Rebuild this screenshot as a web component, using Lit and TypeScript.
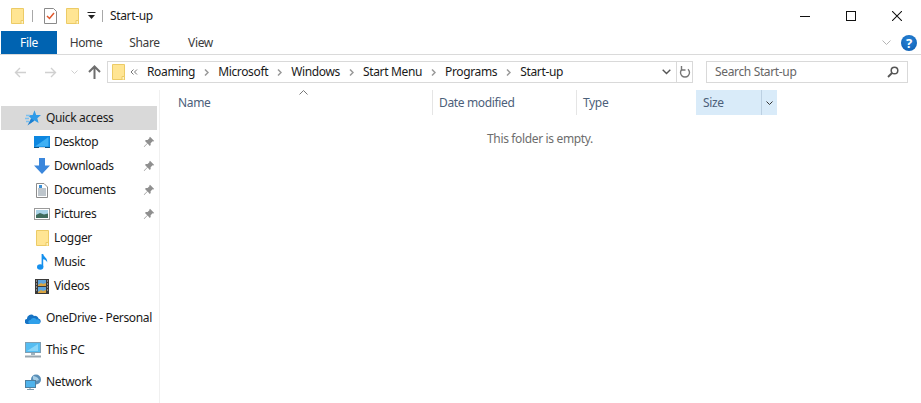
import { LitElement, html, css, svg } from "lit";
import { customElement } from "lit/decorators.js";

const folder = svg`<svg width="13" height="16" viewBox="0 0 13 16"><path d="M.5.5h12v15H.5z" fill="#ffe593" stroke="#eccb66"/><path d="M10 12.500h2.500V16H10z" fill="#fff3c4" stroke="#eccb66"/></svg>`;
const pin = svg`<svg width="12" height="12" viewBox="0 0 12 12"><path d="M7 .8l4.200 4.200-1 .6-.6-.3-2 2 .1 1.800-.9.800L4.600 7.600 1.200 11l-.4-.4 3.400-3.400-2.200-2.300.8-.9 1.800.1 2-2-.3-.6z" fill="#8f8f8f"/></svg>`;

const icons: Record<string, unknown> = {
  star: svg`<svg width="16" height="16" viewBox="0 0 16 16"><path d="M9.500.3l1.700 4.600 4.800.2-3.700 3.100 1.300 4.800-4.200-2.600L5 13.400l1.200-4.900-3.400-3.300 4.900-.3z" fill="#2f9be8"/><path d="M1 5.500h4M0 8.500h4M1 11.500h3" stroke="#7cc0ef" stroke-width="1.400"/><path d="M6 8.500L2.500 15.500 9.300 10.800z" fill="#1c7fd0"/></svg>`,
  desktop: svg`<svg width="16" height="13" viewBox="0 0 16 13"><rect width="16" height="12" fill="#0d87e0"/><path d="M1 10.500L14.500 1v9.500z" fill="#3fb0f4"/><path d="M0 11.500h16" stroke="#10507f"/><path d="M5 11.500h6" stroke="#cfd8df"/></svg>`,
  down: svg`<svg width="16" height="16" viewBox="0 0 16 16"><path d="M5 0h6v7.500h5L8 16 0 7.500h5z" fill="#3b87dc"/></svg>`,
  doc: svg`<svg width="12" height="15" viewBox="0 0 12 15"><path d="M.5.5h7.500l3.500 3.500v10.500H.5z" fill="#fff" stroke="#8c8c8c"/><path d="M2 6h8M2 8h8M2 10h8M2 12h8" stroke="#7d8c99"/><path d="M3 2v3h3V2z" fill="#3a8fd6"/></svg>`,
  pic: svg`<svg width="16" height="12" viewBox="0 0 16 12"><rect x=".5" y=".5" width="15" height="11" fill="#fff" stroke="#9a9a9a"/><rect x="2" y="2" width="12" height="8" fill="#a8d2e6"/><path d="M2 7l4-2 4 1.500 4-1V10H2z" fill="#3f6b5c"/></svg>`,
  folder,
  music: svg`<svg width="11" height="16" viewBox="0 0 11 16"><ellipse cx="3.200" cy="13" rx="3.200" ry="2.800" fill="#1590ee"/><path d="M4.600 0h1.600c.3 3 4.600 4 4 8.500C9.800 6.500 7.500 5.500 6.200 5.200V13H4.600z" fill="#1590ee"/></svg>`,
  video: svg`<svg width="14" height="15" viewBox="0 0 14 15"><rect width="14" height="15" fill="#3a3a3a"/><path d="M1 1.500h1v1H1zM1 4.500h1v1H1zM1 7.500h1v1H1zM1 10.500h1v1H1zM12 1.500h1v1h-1zM12 4.500h1v1h-1zM12 7.500h1v1h-1zM12 10.500h1v1h-1z" fill="#ddd"/><rect x="3" y="1" width="8" height="6" fill="#5ea4dc"/><rect x="3" y="8" width="8" height="6" fill="#5ea4dc"/><path d="M3 6l3-2 2 1 3-1v3H3zM3 13l3-2 2 1 3-1v3H3z" fill="#d9a441"/></svg>`,
  cloud: svg`<svg width="16" height="11" viewBox="0 0 16 11"><path d="M2.500 11A2.500 2.500 0 0 1 2 6a4 4 0 0 1 7-3 3.500 3.500 0 0 1 4.500 2.500A2.800 2.800 0 0 1 13.500 11z" fill="#1673c4"/><path d="M5 11a2 2 0 0 1 .5-4 3.500 3.500 0 0 1 6-.5A2.300 2.300 0 0 1 13.500 11z" fill="#2fa0ea"/></svg>`,
  pc: svg`<svg width="16" height="16" viewBox="0 0 16 16"><rect x=".5" y=".5" width="15" height="10" fill="#55bdf2" stroke="#7f9fb3"/><path d="M2 9L13 2v7z" fill="#8ad6f9"/><path d="M6 11h4v2H6z" fill="#9fb3c0"/><path d="M0 14.500h16" stroke="#9aa6ae" stroke-width="2"/></svg>`,
  net: svg`<svg width="16" height="16" viewBox="0 0 16 16"><circle cx="11" cy="5.500" r="5" fill="#5a8fb8"/><path d="M8 2c2 0 5 1 6 4-2 1-5 1-6-1z" fill="#a8cfe6"/><rect x=".5" y="6.500" width="10" height="7" fill="#4fb3ec" stroke="#4d7f9f"/><path d="M5 14v1.500M2 15.500h7" stroke="#7d9aad"/></svg>`,
};

const nav = [
  { label: "Quick access", icon: "star", cls: "top sel" },
  { label: "Desktop", icon: "desktop", pin: true },
  { label: "Downloads", icon: "down", pin: true },
  { label: "Documents", icon: "doc", pin: true },
  { label: "Pictures", icon: "pic", pin: true },
  { label: "Logger", icon: "folder" },
  { label: "Music", icon: "music" },
  { label: "Videos", icon: "video" },
  { label: "OneDrive - Personal", icon: "cloud", cls: "top gap" },
  { label: "This PC", icon: "pc", cls: "top gap" },
  { label: "Network", icon: "net", cls: "top gap" },
];

const crumbs = ["Roaming", "Microsoft", "Windows", "Start Menu", "Programs", "Start-up"];

@customElement("app-root")
export class AppRoot extends LitElement {
  static styles = css`
    :host { display: block; width: 921px; height: 403px; overflow: hidden; background: #fff;
      font: 12px/16px "Noto Sans", "Open Sans", sans-serif; color: #1a1a1a; letter-spacing: -0.35px; }
    .title { height: 31px; display: flex; align-items: center; padding-left: 11px; box-sizing: border-box; }
    .title svg { display: block; }
    .bar { width: 1px; height: 12px; background: #a8a8a8; }
    .b1 { margin: 0 11px 0 8px; }
    .chk { margin-right: 9px; }
    .qa { margin: 0 6px 0 8px; }
    .b2 { margin-right: 7px; }
    .win { margin-left: auto; margin-right: 1px; display: flex; }
    .win span { width: 46px; height: 30px; display: flex; align-items: center; justify-content: center; }
    .ribbon { height: 24px; display: flex; border-bottom: 1px solid #dadada; padding-left: 1px; box-sizing: border-box; align-items: stretch; }
    .tab { color: #3b3b3b; display: flex; align-items: center; justify-content: center; padding-top: 1px; }
    .file { width: 56px; background: #0063b1; color: #fff; }
    .t1 { width: 58px; }
    .t2 { width: 59px; }
    .t3 { width: 53px; }
    .help { margin-left: auto; display: flex; align-items: center; gap: 10px; margin-right: 4px; }
    .q { width: 16px; height: 16px; border-radius: 50%; background: radial-gradient(circle at 50% 35%, #2a85d8, #0a5aae); color: #fff; font-weight: 700; font-size: 13px; line-height: 16px; text-align: center; letter-spacing: 0; }
    .addr { height: 35px; display: flex; align-items: center; padding: 0 13px 1px 14px; box-sizing: border-box; }
    .navs { display: flex; align-items: center; width: 93px; }
    .fwd { margin-left: 17px; }
    .rec { margin-left: 14px; }
    .up { margin-left: 10px; }
    .box { height: 22px; border: 1px solid #d9d9d9; box-sizing: border-box; display: flex; align-items: center; }
    .path { width: 586px; }
    .path .f { margin: 0 5px 0 4px; display: flex; }
    .lt { margin-right: 9px; }
    .sep { margin: 0 9px; display: flex; }
    .end { margin-left: auto; display: flex; align-items: center; height: 100%; }
    .dd { width: 19px; display: flex; justify-content: center; }
    .rf { width: 16px; height: 100%; box-sizing: border-box; border-left: 1px solid #d9d9d9; display: flex; align-items: center; justify-content: center; }
    .search { width: 202px; margin-left: 13px; padding: 0 8px; color: #666; justify-content: space-between; }
    .main { display: flex; height: 313px; }
    .side { width: 160px; box-sizing: border-box; border-right: 1px solid #f0f0f0; padding: 16px 0 0 1px; flex: none; }
    .row { height: 24px; display: flex; align-items: center; width: 156px; }
    .ico { width: 16px; display: flex; justify-content: center; align-items: center; margin: 0 4px 0 33px; }
    .top .ico { margin: 0 5px 0 24px; }
    .gap { margin-top: 8px; }
    .sel { background: #d9d9d9; }
    .pin { margin-left: auto; margin-right: 2px; display: flex; }
    .content { flex: 1; }
    .head { display: grid; grid-template-columns: 260px 144px 120px 81px; margin-left: 12px; height: 25px; color: #4c607a; }
    .col { display: flex; align-items: center; padding: 1px 0 0 7px; position: relative; }
    .col:first-child { padding-left: 6px; }
    .col + .col::before { content: ""; position: absolute; left: 0; top: 0; bottom: 0; width: 1px; background: #e5e5e5; }
    .size { background: #d9ebf9; }
    .size::before { display: none; }
    .sizedd { position: absolute; right: 0; top: 0; bottom: 0; width: 15px; border-left: 1px solid #bcd0e2; display: flex; align-items: center; justify-content: center; }
    .sort { position: absolute; left: 127px; top: 0; display: flex; }
    .emptywrap { padding: 16px 0 0 327px; color: #6d6d6d; }
  `;

  render() {
    const arrowSep = svg`<svg width="5" height="7" viewBox="0 0 5 7"><path d="M1 .5L4 3.500 1 6.500" fill="none" stroke="#999" stroke-width="1.500"/></svg>`;
    return html`
      <div class="title">
        ${folder}<span class="bar b1"></span>
        <svg class="chk" width="13" height="16" viewBox="0 0 13 16"><path d="M.5.5h9l3 3v12H.5z" fill="#fff" stroke="#8a8a8a"/><path d="M3 8l2.500 2.500L10 5" fill="none" stroke="#e0562a" stroke-width="1.500"/></svg>
        ${folder}
        <svg class="qa" width="9" height="8" viewBox="0 0 9 8"><path d="M.5.500h8" stroke="#222"/><path d="M1 3h7L4.500 7z" fill="#222"/></svg>
        <span class="bar b2"></span>
        <span>Start-up</span>
        <div class="win">
          <span><svg width="10" height="10" viewBox="0 0 10 10"><path d="M0 5.500h10" stroke="#111"/></svg></span>
          <span><svg width="10" height="10" viewBox="0 0 10 10"><rect x=".5" y=".5" width="9" height="9" fill="none" stroke="#111"/></svg></span>
          <span><svg width="10" height="10" viewBox="0 0 10 10"><path d="M0 0l10 10M10 0L0 10" stroke="#111" stroke-width="1.050"/></svg></span>
        </div>
      </div>
      <div class="ribbon">
        <div class="tab file">File</div>
        <div class="tab t1">Home</div>
        <div class="tab t2">Share</div>
        <div class="tab t3">View</div>
        <div class="help">
          <svg width="9" height="6" viewBox="0 0 9 6"><path d="M.5.500l4 4 4-4" fill="none" stroke="#b5b5b5"/></svg>
          <div class="q">?</div>
        </div>
      </div>
      <div class="addr">
        <div class="navs">
          <svg width="13" height="11" viewBox="0 0 13 11"><path d="M12 5.500H2M6 1L1.500 5.500 6 10" fill="none" stroke="#d0d0d0" stroke-width="1.400"/></svg>
          <svg class="fwd" width="13" height="11" viewBox="0 0 13 11"><path d="M1 5.500h10M7 1l4.500 4.500L7 10" fill="none" stroke="#d0d0d0" stroke-width="1.400"/></svg>
          <svg class="rec" width="7" height="5" viewBox="0 0 7 5"><path d="M.5.500L3.500 3.500 6.500.5" fill="none" stroke="#cfcfcf"/></svg>
          <svg class="up" width="13" height="14" viewBox="0 0 13 14"><path d="M6.500 14V2M1 7l5.500-5.500L12 7" fill="none" stroke="#6e6e6e" stroke-width="2"/></svg>
        </div>
        <div class="box path">
          <span class="f">${folder}</span>
          <svg class="lt" width="8" height="6" viewBox="0 0 8 6"><path d="M3.500.5L1 3l2.500 2.500M7 .5L4.500 3 7 5.500" fill="none" stroke="#777"/></svg>
          ${crumbs.map(
            (c, i) => html`<span>${c}</span>${i < crumbs.length - 1 ? html`<span class="sep">${arrowSep}</span>` : ""}`
          )}
          <div class="end">
            <span class="dd"><svg width="9" height="6" viewBox="0 0 9 6"><path d="M.7.700l3.800 3.800 3.800-3.800" fill="none" stroke="#555" stroke-width="1.400"/></svg></span>
            <span class="rf"><svg width="12" height="13" viewBox="0 0 12 13"><path d="M3 3.200a4.500 4.500 0 1 0 6 0" fill="none" stroke="#777" stroke-width="1.400"/><path d="M2.500 0v4h4" fill="none" stroke="#777" stroke-width="1.400"/></svg></span>
          </div>
        </div>
        <div class="box search">
          <span>Search Start-up</span>
          <svg width="12" height="12" viewBox="0 0 12 12"><circle cx="7.500" cy="4.500" r="3.300" fill="none" stroke="#555" stroke-width="1.500"/><path d="M5 7l-4 4" stroke="#555" stroke-width="1.800"/></svg>
        </div>
      </div>
      <div class="main">
        <div class="side">
          ${nav.map(
            (n) => html`<div class="row ${n.cls ?? ""}">
              <span class="ico">${icons[n.icon]}</span><span>${n.label}</span>
              ${n.pin ? html`<span class="pin">${pin}</span>` : ""}
            </div>`
          )}
        </div>
        <div class="content">
          <div class="head">
            <div class="col">Name<span class="sort"><svg width="9" height="5" viewBox="0 0 9 5"><path d="M.5 4.500l4-4 4 4" fill="none" stroke="#777"/></svg></span></div>
            <div class="col">Date modified</div>
            <div class="col">Type</div>
            <div class="col size">Size<span class="sizedd"><svg width="7" height="4" viewBox="0 0 7 4"><path d="M.5.500l3 3 3-3" fill="none" stroke="#333"/></svg></span></div>
          </div>
          <div class="emptywrap">This folder is empty.</div>
        </div>
      </div>
    `;
  }
}
